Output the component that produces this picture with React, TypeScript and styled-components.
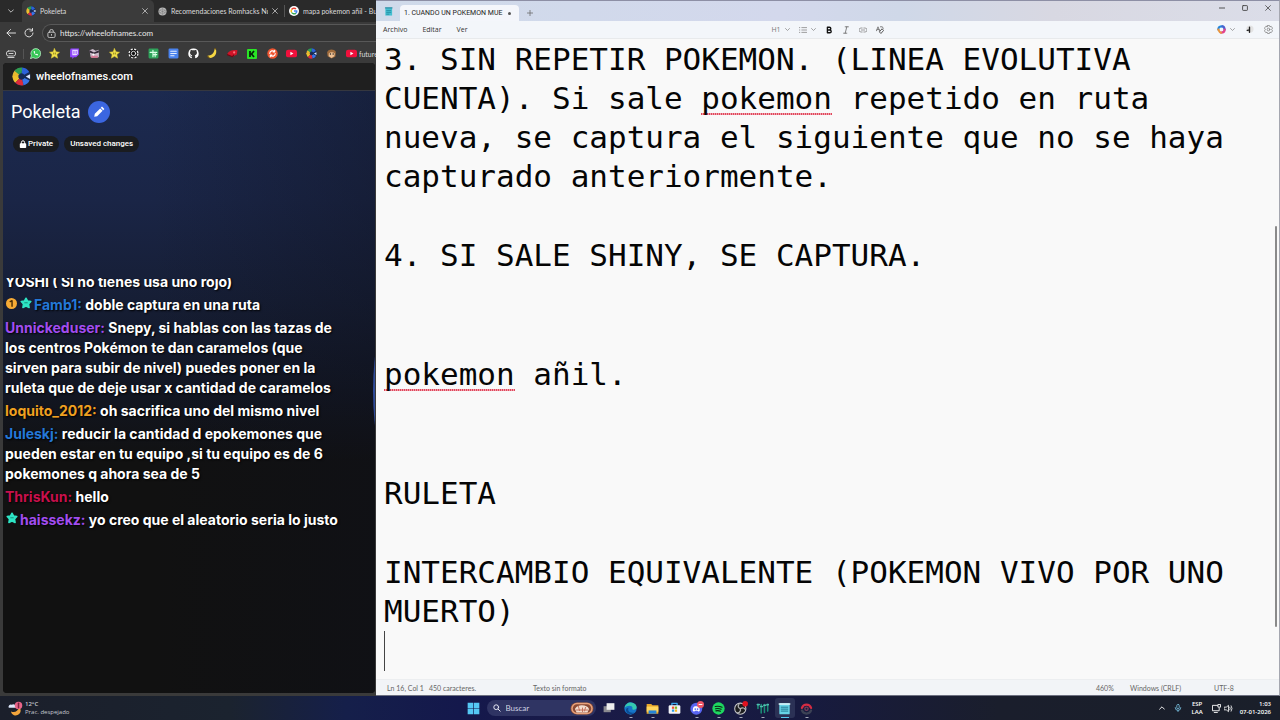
import React from "react";
import styled, { createGlobalStyle } from "styled-components";

const ui = `"Open Sans", "Noto Sans", sans-serif`;
const narrow = `Lato, "Open Sans", sans-serif`;

const Global = createGlobalStyle`
  *, *::before, *::after { box-sizing: border-box; }
  body { margin: 0; background: #3a3a3a; font-family: ${ui}; }
  button { margin: 0; padding: 0; border: 0; background: none; color: inherit; font: inherit; cursor: pointer; }
  svg { display: block; flex: none; }
  h1, p { margin: 0; font-weight: 400; }
`;

const Desktop = styled.div`
  min-height: 100vh;
  display: flex;
  flex-direction: column;
`;

const Windows = styled.main`
  flex: 1;
  display: grid;
  grid-template-columns: minmax(0, 376fr) minmax(0, 904fr);
`;

/* ---------- browser ---------- */

const Browser = styled.section`
  display: flex;
  flex-direction: column;
  background: #3a3a3a;
  color: #dcdcdc;
  overflow: hidden;
`;

const TabStrip = styled.div`
  display: flex;
  height: 22px;
  background: #2a2a2a;
`;

const TabMenu = styled.button`
  flex: none;
  width: 22px;
  display: grid;
  place-items: center;
`;

const Tab = styled.div<{ $active?: boolean; $width?: number }>`
  flex: ${(p) => (p.$width ? `none` : `1`)};
  width: ${(p) => (p.$width ? `${p.$width}px` : `auto`)};
  min-width: 0;
  display: flex;
  align-items: center;
  gap: 4px;
  padding: 0 ${(p) => (p.$width ? 6 : 0)}px 0 4px;
  border-radius: 5px 5px 0 0;
  background: ${(p) => (p.$active ? "#3b3b3b" : "transparent")};
`;

const TabTitle = styled.button`
  flex: 1;
  min-width: 0;
  overflow: hidden;
  white-space: nowrap;
  text-align: left;
  font: 7px/12px ${narrow};
`;

const TabDivider = styled.span`
  flex: none;
  width: 1px;
  height: 12px;
  margin: 5px 0;
  background: #555;
`;

const AddressRow = styled.div`
  display: flex;
  align-items: center;
  height: 22px;
  padding-left: 6px;
  gap: 8px;
`;

const Address = styled.label`
  flex: 1;
  display: flex;
  align-items: center;
  gap: 4px;
  height: 18px;
  padding-left: 4px;
  border: 1px solid #585858;
  border-right: 0;
  border-radius: 9px 0 0 9px;
  background: #343434;
`;

const AddressInput = styled.input`
  flex: 1;
  min-width: 0;
  padding: 0;
  border: 0;
  outline: 0;
  background: none;
  color: #e8e8e8;
  font: 8px/12px ${narrow};
`;

const Bookmarks = styled.nav`
  display: flex;
  align-items: center;
  height: 19px;
  padding-left: 6px;
  overflow: hidden;
`;

const BookmarkList = styled.div`
  flex: 1;
  display: flex;
  justify-content: space-between;
  margin-left: 5px;
`;

const BookmarkDivider = styled.span`
  width: 1px;
  height: 10px;
  margin-left: 7px;
  background: #555;
`;

const BookmarkLabel = styled.span`
  width: 17px;
  margin-left: 2px;
  overflow: hidden;
  white-space: nowrap;
  font: 7px/12px ${narrow};
`;

const Page = styled.div`
  position: relative;
  flex: 1;
  display: flex;
  flex-direction: column;
  margin: 0 1px 3px 3px;
  border-radius: 4px;
  overflow: hidden;
  background: #111;
`;

const SiteHeader = styled.header`
  display: flex;
  align-items: center;
  gap: 5px;
  height: 28px;
  padding-left: 9px;
  border-bottom: 1px solid #35373f;
  background: #1f1f1f;
  color: #fff;
  font: 500 11px/16px Roboto, sans-serif;
`;

const Wheel = styled.div`
  flex: 1;
  padding: 9px 0 0 2px;
  background: linear-gradient(90deg, transparent 40%, rgba(14, 16, 28, 0.35)),
    linear-gradient(180deg, #1c2a50 0, #1a2546 110px, #161e35 210px, #121622 300px, #111 370px);
`;

const WheelEdge = styled.div`
  position: absolute;
  top: 28px;
  left: calc(100% - 2px);
  width: 600px;
  height: 600px;
  border-radius: 50%;
  background: #2f4b9a;
`;

const TitleRow = styled.div`
  display: flex;
  align-items: center;
  gap: 7px;
  padding-left: 6px;
`;

const Title = styled.h1`
  color: #fff;
  font: 400 18px/24px Roboto, sans-serif;
`;

const EditButton = styled.button`
  width: 22px;
  height: 22px;
  display: grid;
  place-items: center;
  border-radius: 50%;
  background: #3b66e0;
`;

const Chips = styled.div`
  display: flex;
  gap: 5px;
  margin: 12px 0 0 8px;
`;

const Chip = styled.span`
  display: flex;
  align-items: center;
  gap: 1px;
  height: 16px;
  padding: 0 6px;
  border-radius: 8px;
  background: #1a1c20;
  color: #fff;
  font: 500 8px/16px Roboto, sans-serif;
`;

const Chat = styled.div`
  margin-top: 126px;
  padding-bottom: 16px;
  overflow: hidden;
  display: flex;
  flex-direction: column;
  gap: 3px;
`;

const Message = styled.p<{ $cut?: boolean }>`
  margin-top: ${(p) => (p.$cut ? "-6px" : "0")};
  color: #fff;
  font: 700 14px/20px Inter, "Open Sans", sans-serif;
  white-space: pre;
  text-shadow: 1px 1px 2px #000;
  svg { display: inline-block; margin: 0 2px 0 1px; vertical-align: 1px; }
`;

const Author = styled.span<{ $color: string }>`
  color: ${(p) => p.$color};
`;

/* ---------- notepad ---------- */

const Notepad = styled.section`
  display: flex;
  flex-direction: column;
  border-top: 1px solid #8d8fa5;
  border-right: 1px solid #a5a7b0;
  border-bottom: 1px solid #6d7080;
  background: #f9f9f9;
  color: #333;
`;

const NoteTitleBar = styled.div`
  display: flex;
  height: 20px;
  background: linear-gradient(90deg, #cfdaea, #d3d8ec 45%, #cfd8e8 58%, #d8d8e2 75%, #dbdde8);
`;

const AppIcon = styled.span`
  width: 24px;
  display: grid;
  place-items: center;
`;

const NoteTab = styled.button`
  width: 119px;
  height: 16px;
  margin-top: 4px;
  padding: 0 8px 0 4px;
  display: flex;
  align-items: center;
  justify-content: space-between;
  border-radius: 4px 4px 0 0;
  background: #f4f6fb;
  color: #222;
  font: 7px/12px Roboto, sans-serif;
  white-space: nowrap;
`;

const Dot = styled.i`
  width: 3px;
  height: 3px;
  border-radius: 50%;
  background: #555;
`;

const NewTab = styled.button`
  width: 22px;
  display: grid;
  place-items: center;
  padding-top: 4px;
`;

const WindowControls = styled.div`
  display: flex;
  margin-left: auto;
  height: 13px;
  button { width: 23px; display: grid; place-items: center; }
`;

const MenuBar = styled.div`
  display: grid;
  grid-template-columns: 1fr auto 1fr;
  align-items: center;
  height: 18px;
  border-bottom: 1px solid #e8eaec;
  background: #f3f6fa;
`;

const Menus = styled.div`
  display: flex;
  gap: 15px;
  padding-left: 7px;
  font-size: 7px;
  line-height: 12px;
`;

const Tools = styled.div<{ $end?: boolean }>`
  display: flex;
  align-items: center;
  gap: ${(p) => (p.$end ? "10px" : "9px")};
  justify-self: ${(p) => (p.$end ? "end" : "center")};
  padding-right: ${(p) => (p.$end ? "6px" : "0")};
  button { display: flex; align-items: center; gap: 4px; font-size: 7px; line-height: 10px; color: #777; }
`;

const EditorRow = styled.div`
  flex: 1;
  display: flex;
  justify-content: space-between;
`;

const Editor = styled.div`
  padding: 1px 0 0 8px;
  outline: 0;
  color: #050505;
  font: 31px/39px "DejaVu Sans Mono", monospace;
  white-space: pre;
`;

const Paragraph = styled.p<{ $blank?: number }>`
  margin-bottom: ${(p) => (p.$blank ?? 0) * 40}px;
`;

const Misspelled = styled.span`
  background: repeating-linear-gradient(90deg, #e0475c 0 1px, #f0a0ab 1px 2px) left calc(100% - 1px) / 100% 2px no-repeat;
`;

const Caret = styled.i`
  display: block;
  width: 1px;
  height: 40px;
  background: #444;
`;

const ScrollTrack = styled.div`
  display: flex;
  flex-direction: column;
  width: 4px;
  padding: 187px 0 52px;
`;

const ScrollThumb = styled.i`
  flex: 1;
  width: 2px;
  border-radius: 1px;
  background: #8a8a8a;
`;

const StatusBar = styled.footer`
  display: grid;
  grid-template-columns: 42px 104px 1fr 34px 84px 65px;
  align-items: center;
  height: 16px;
  padding-left: 11px;
  border-top: 1px solid #eceef0;
  background: #f2f4f7;
  color: #666;
  font: 7px/12px ${narrow};
  white-space: nowrap;
`;

/* ---------- taskbar ---------- */

const Taskbar = styled.footer`
  display: grid;
  grid-template-columns: 1fr auto 1fr;
  align-items: center;
  height: 24px;
  background: linear-gradient(90deg, #1b1f2b, #1b232f 18%, #151f4a 27%, #14184c 36%, #1a1b48 45%, #171a40 62%, #1a1e2c 78%, #1a1f2a);
  color: #fff;
  font-size: 7px;
  line-height: 8px;
`;

const Weather = styled.button`
  display: flex;
  align-items: center;
  gap: 2px;
  padding-left: 8px;
  text-align: left;
  white-space: nowrap;
  font-size: 6px;
  span { display: block; color: #c4c8d0; }
  b { display: block; font-weight: 600; }
`;

const Apps = styled.div`
  display: flex;
  gap: 2px;
`;

const AppButton = styled.button<{ $running?: boolean; $active?: boolean }>`
  position: relative;
  width: 20px;
  height: 20px;
  display: grid;
  place-items: center;
  border-radius: 3px;
  background: ${(p) => (p.$active ? "#2b3155" : "transparent")};
  &::after {
    content: "";
    display: ${(p) => (p.$running || p.$active ? "block" : "none")};
    position: absolute;
    bottom: 0;
    left: 50%;
    width: ${(p) => (p.$active ? 8 : 3)}px;
    height: 1px;
    transform: translateX(-50%);
    background: ${(p) => (p.$active ? "#58c8f0" : "#a5a8b8")};
  }
`;

const Search = styled.label`
  display: flex;
  align-items: center;
  gap: 5px;
  width: 109px;
  height: 16px;
  margin: 2px 1px;
  padding: 0 2px 0 6px;
  border-radius: 8px;
  background: #2f3463;
  input {
    flex: 1;
    min-width: 0;
    padding: 0;
    border: 0;
    outline: 0;
    background: none;
    font: 8px/12px ${narrow};
  }
  input::placeholder { color: #d0d3e4; opacity: 1; }
`;

const Tray = styled.div`
  justify-self: end;
  display: flex;
  align-items: center;
  gap: 9px;
  padding-right: 9px;
  font-size: 6px;
  font-weight: 600;
  text-align: center;
  white-space: nowrap;
`;

const TrayPair = styled.button`
  display: flex;
  gap: 3px;
`;

const Clock = styled.time`
  margin-left: -2px;
  text-align: right;
`;

/* ---------- icons ---------- */

type IconProps = { size?: number; h?: number; box?: string; children: React.ReactNode };
const Icon = ({ size = 10, h, box = "0 0 20 20", children }: IconProps) => (
  <svg width={size} height={h ?? size} viewBox={box} fill="none" strokeLinecap="round" strokeLinejoin="round" aria-hidden="true">
    {children}
  </svg>
);

const Close = ({ color = "#ccc", size = 6 }) => (
  <Icon size={size}><path d="M2 2 18 18M18 2 2 18" stroke={color} strokeWidth="2.6" /></Icon>
);
const Chevron = ({ color = "#888", size = 5, up = false }) => (
  <Icon size={size}><path d={up ? "M2 14 10 6l8 8" : "M2 6l8 8 8-8"} stroke={color} strokeWidth="3" /></Icon>
);
const WheelLogo = ({ size = 10 }) => (
  <Icon size={size}>
    <circle cx="10" cy="10" r="9.6" fill="#162a55" />
    <g strokeWidth="6" strokeLinecap="butt">
      <path d="M3.600 10.500A6.400 6.400 0 0 1 6 5" stroke="#e8b92e" />
      <path d="M3.600 9.500A6.400 6.400 0 0 0 5.500 14.500" stroke="#efc02c" />
      <path d="M5 6A6.400 6.400 0 0 1 10.500 3.600" stroke="#2f9d50" />
      <path d="M10.500 3.600A6.400 6.400 0 0 1 15.500 6.800" stroke="#2d62d8" />
      <path d="M5.500 14.500A6.400 6.400 0 0 0 11.500 16.200" stroke="#dc2b3a" />
      <path d="M11.500 16.200A6.400 6.400 0 0 0 15.800 12.800" stroke="#3975e8" />
    </g>
    <path d="M14.500 10l4.500-2.500v5z" fill="#dfe8ff" />
  </Icon>
);
const GoogleLogo = () => (
  <Icon size={10}>
    <circle cx="10" cy="10" r="10" fill="#fff" />
    <g strokeWidth="2.8" strokeLinecap="butt">
      <path d="M14 6A5.7 5.7 0 0 0 5.2 7" stroke="#ea4335" />
      <path d="M5.2 7a5.7 5.7 0 0 0 0 6" stroke="#fbbc05" />
      <path d="M5.2 13a5.7 5.7 0 0 0 8.5 1.3" stroke="#34a853" />
      <path d="M13.7 14.3A5.7 5.7 0 0 0 15.7 10H10" stroke="#4285f4" />
    </g>
  </Icon>
);
const Star = () => (
  <Icon size={11}><path d="M10 1l2.7 6 6.5.7-4.9 4.3 1.4 6.5L10 15.2l-5.700 3.300 1.400-6.500L.8 7.700l6.500-.7z" fill="#f2e34b" stroke="#d6c534" strokeWidth="1" /><path d="M8.500 9v2M11.500 9v2" stroke="#6a5c10" strokeWidth="1.300" /></Icon>
);
const YouTube = () => (
  <Icon size={11}><rect x="0" y="3" width="20" height="14" rx="4" fill="#f0103c" /><path d="M8 7l5.500 3L8 13z" fill="#fff" /></Icon>
);
const Bookmark = styled.button`
  width: 12px;
  height: 12px;
  display: grid;
  place-items: center;
`;

const bookmarks: [string, React.ReactNode][] = [
  ["WhatsApp", <Icon size={11}><path d="M1 19l1.500-5A9 9 0 1 1 6 17.800z" fill="#37c657" stroke="#d8ffe0" strokeWidth="1.200" /><path d="M6.500 6c0 4 3.500 7.500 7.500 7.500l.5-2-2.300-1-1.200 1c-1.200-.6-2-1.400-2.600-2.600l1-1.200-1-2.200z" fill="#fff" /></Icon>],
  ["Estrella", <Star />],
  ["Twitch", <Icon size={11}><path d="M3 1h15v11l-5 5H9l-3 3v-3H2V4z" fill="#9147ff" /><path d="M6 3h10v8l-3 2H6z" fill="#eadcff" /><path d="M9 6v4M13 6v4" stroke="#9147ff" strokeWidth="1.800" /></Icon>],
  ["Personaje", <Icon size={11}><path d="M1 4l6-2 5 3 6-2v14H3z" fill="#c9b9c9" /><path d="M1 4l8 4 9-4v4l-9 3-8-3z" fill="#332838" /><path d="M4 14h12v4H4z" fill="#d77b98" /><circle cx="8" cy="12" r="2" fill="#fff" /></Icon>],
  ["Favoritos", <Star />],
  ["Rueda", <Icon size={11}><circle cx="10" cy="10" r="9" fill="#111" /><circle cx="10" cy="10" r="8" stroke="#f2f2f2" strokeWidth="2.400" strokeDasharray="4 2.300" strokeLinecap="butt" /><circle cx="10" cy="10" r="4" stroke="#eee" strokeWidth="1.600" /></Icon>],
  ["Hojas", <Icon size={11}><rect x="1" y="1" width="18" height="18" rx="2" fill="#2fa35b" /><path d="M9 4v12M4 8h12M13 8v8M9 12h7" stroke="#d9ffe6" strokeWidth="2" /></Icon>],
  ["Documentos", <Icon size={11}><rect x="1" y="1" width="18" height="18" rx="2" fill="#4a83ee" /><path d="M5 6h10M5 10h10M5 14h6" stroke="#e5efff" strokeWidth="2" /></Icon>],
  ["GitHub", <Icon size={11}><path d="M10 1a9 9 0 0 0-3 17.600v-3c-2.500.5-3-1-3.500-2 2 .2 2 1.200 3.500 1 .1-.7.500-1.100.8-1.400-5-.8-4.700-6-3-7.600-.2-.8 0-1.800.2-2.400 1 .1 2 .7 2.700 1.100a9 9 0 0 1 4.600 0c.8-.5 1.700-1 2.700-1.100.3.800.4 1.600.2 2.400 1.800 2 1.700 6.800-3 7.600.6.5.8 1.200.8 2v3.400A9 9 0 0 0 10 1z" fill="#fff" /></Icon>],
  ["Plátano", <Icon size={11}><path d="M14 1l2 1c3 8-2 17-12 16l-3-4c7 0 12-4 13-13z" fill="#f6d743" /><path d="M1 15l3 3M14 1l2 1" stroke="#6b5117" strokeWidth="2" /></Icon>],
  ["Gorra", <Icon size={11}><path d="M0 12C3 5 9 3 19 4l-1 8-8 4z" fill="#d01528" /><path d="M0 12l10 4 2-3" stroke="#6f0a15" strokeWidth="2" /><circle cx="13" cy="8" r="2" fill="#ff707d" /></Icon>],
  ["Kick", <Icon size={10}><rect width="20" height="20" rx="2" fill="#29e625" /><path d="M6 4v12M14 4l-5 6 5 6" stroke="#05220a" strokeWidth="3.500" strokeLinecap="butt" /></Icon>],
  ["Sincronizar", <Icon size={11}><circle cx="10" cy="10" r="9.500" fill="#ee5430" /><path d="M5 10a5 5 0 0 1 9-3M15 10a5 5 0 0 1-9 3M14 4v3h-3M6 16v-3h3" stroke="#fff" strokeWidth="2" /></Icon>],
  ["YouTube", <YouTube />],
  ["Wheel of Names", <WheelLogo size={11} />],
  ["Mono", <Icon size={11}><path d="M2 8c1-6 12-8 16-1l-1 9-7 3-7-4z" fill="#9d6a3b" /><path d="M5 10c3-3 8-3 11 0l-1 5-5 3-5-3z" fill="#edc195" /><circle cx="8" cy="11" r="1.300" fill="#222" /><circle cx="13" cy="11" r="1.300" fill="#222" /></Icon>],
  ["YouTube futuro", <YouTube />],
];

const SubBadge = () => (
  <Icon size={12}>
    <path d="M10 2l2.500 4.500 5.500 1-3.800 4 1 6L10 15.200l-5.200 2.300 1-6L2 7.500l5.500-1z" fill="#2ee6c5" stroke="#2ee6c5" strokeWidth="2.500" />
    <path d="M8.500 9v1M11.500 9v1" stroke="#0b6a5c" strokeWidth="1.400" />
  </Icon>
);
const FirstBadge = () => (
  <Icon size={11}>
    <circle cx="10" cy="10" r="10" fill="#f6aa35" />
    <path d="M7.500 6.500L11 5v10" stroke="#4a2c05" strokeWidth="2.600" />
  </Icon>
);

const messages: { author?: string; color?: string; badges?: React.ReactNode; text: string }[] = [
  { text: "YOSHI ( SI no tienes usa uno rojo)" },
  { author: "Famb1", color: "#2478d8", badges: <><FirstBadge /><SubBadge /></>, text: "doble captura en una ruta" },
  {
    author: "Unnickeduser", color: "#a24df0",
    text: "Snepy, si hablas con las tazas de\nlos centros Pokémon te dan caramelos (que\nsirven para subir de nivel) puedes poner en la\nruleta que de deje usar x cantidad de caramelos",
  },
  { author: "loquito_2012", color: "#f0a020", text: "oh sacrifica uno del mismo nivel" },
  {
    author: "Juleskj", color: "#2478d8",
    text: "reducir la cantidad d epokemones que\npueden estar en tu equipo ,si tu equipo es de 6\npokemones q ahora sea de 5",
  },
  { author: "ThrisKun", color: "#c8104c", text: "hello" },
  { author: "haissekz", color: "#a24df0", badges: <SubBadge />, text: "yo creo que el aleatorio seria lo justo" },
];

type App = { name: string; running?: boolean; active?: boolean; icon: React.ReactNode };
const apps: App[] = [
  { name: "Vista de tareas", icon: <Icon size={12}><rect x="1" y="7" width="12" height="10" fill="#8a8a90" /><rect x="6" y="2" width="13" height="11" fill="#eee" /></Icon> },
  { name: "Edge", running: true, icon: <Icon size={13}><circle cx="10" cy="10" r="9.500" fill="#1675c8" /><path d="M1 9C2 2 9-1 15 2s6 10 0 10c-3 0-2-2-2-3 0-4-8-5-12 0z" fill="#35c9b0" /><path d="M7 9c-2 5 2 9 9 7-4 4-12 3-13-3 0-3 2-4 4-4z" fill="#0c4c94" /></Icon> },
  { name: "Explorador", running: true, icon: <Icon size={13}><path d="M1 3h7l2 2h9v13H1z" fill="#e9a92a" /><path d="M1 7h18v8H1z" fill="#ffd65c" /><path d="M4 13h12v5H4z" fill="#2685d8" /></Icon> },
  { name: "Store", icon: <Icon size={13}><path d="M6 5V2h8v3" stroke="#39a8ee" strokeWidth="2" /><rect x="1" y="5" width="18" height="13" rx="2" fill="#f3f5fa" /><path d="M6 7h3.500v3.500H6z" fill="#f05030" /><path d="M10.500 7H14v3.500h-3.500z" fill="#7ab821" /><path d="M6 11.500h3.500V15H6z" fill="#2a9fe8" /><path d="M10.500 11.500H14V15h-3.500z" fill="#f8b820" /></Icon> },
  { name: "Discord", running: true, icon: <Icon size={14}><circle cx="9" cy="11" r="8.500" fill="#5865f2" /><path d="M4 14c0-4 1-6 3-6.500h4c2 .5 3 2.500 3 6.500-2 2-3 1-3 0H7c0 1-1 2-3 0z" fill="#fff" /><circle cx="7.500" cy="11.500" r="1.200" fill="#5865f2" /><circle cx="10.800" cy="11.500" r="1.200" fill="#5865f2" /><circle cx="15" cy="5" r="5" fill="#ee5566" /><path d="M13 5h4" stroke="#fff" strokeWidth="1.600" /></Icon> },
  { name: "Spotify", running: true, icon: <Icon size={13}><circle cx="10" cy="10" r="9.500" fill="#1ed760" /><path d="M5 7c4-1 7-.6 10.500 1M5.500 10.500c3-.8 6-.5 8.500.8M6 13.600c2.500-.6 5-.4 7 .7" stroke="#0d2414" strokeWidth="1.700" /></Icon> },
  { name: "OBS", running: true, icon: <Icon size={14}><circle cx="9" cy="11" r="8" fill="#1d1d1f" stroke="#c9c9cc" strokeWidth="1.500" /><path d="M9 11c-3-1-4-4-2-6M9 11c3-2 6-1 7 1M9 11c1 3-1 6-4 6" stroke="#b5b5b8" strokeWidth="1.800" /><circle cx="16" cy="4" r="4" fill="#e0121f" /></Icon> },
  { name: "Mezclador", running: true, icon: <Icon size={13}><path d="M3 4v6M8 4v13M13 4v12M18 4v10" stroke="#1c8d77" strokeWidth="2.400" /><path d="M2 4h3M7 7h3M12 5h3M17 4h2" stroke="#4fc0b0" strokeWidth="2.400" /></Icon> },
  { name: "Bloc de notas", active: true, icon: <Icon size={13}><rect x="2" y="2" width="16" height="17" rx="1.500" fill="#67d3e6" /><path d="M2 3h16" stroke="#e4f8fc" strokeWidth="2.500" /><path d="M5 8h10M5 11h10M5 14h10" stroke="#176c86" strokeWidth="1.300" /></Icon> },
  { name: "Pokémon", running: true, icon: <Icon size={13}><path d="M3 9a7.500 7.500 0 0 1 14 0" stroke="#d52c43" strokeWidth="3.500" /><path d="M3 13a7.500 7.500 0 0 0 14 0" stroke="#3c4255" strokeWidth="3.500" /><circle cx="10" cy="10.500" r="2.500" stroke="#77405a" strokeWidth="2" /></Icon> },
];

export default function App() {
  return (
    <Desktop>
      <Global />
      <Windows>
        <Browser>
          <TabStrip>
            <TabMenu aria-label="Buscar pestañas"><Chevron color="#ccc" size={6} /></TabMenu>
            <Tab $active $width={132}>
              <WheelLogo />
              <TabTitle>Pokeleta</TabTitle>
              <button aria-label="Cerrar pestaña"><Close /></button>
            </Tab>
            <Tab $width={130}>
              <Icon size={9}><circle cx="10" cy="10" r="9" fill="#b9b9b9" /><path d="M4 7l6-3 6 3v6l-6 3-6-3zM4 7l12 6M16 7L4 13M10 4v12" stroke="#777" strokeWidth="1" /></Icon>
              <TabTitle>Recomendaciones Romhacks Nuzl</TabTitle>
              <button aria-label="Cerrar pestaña"><Close /></button>
            </Tab>
            <TabDivider />
            <Tab>
              <GoogleLogo />
              <TabTitle>mapa pokemon añil - Bus</TabTitle>
            </Tab>
          </TabStrip>
          <AddressRow>
            <button aria-label="Atrás"><Icon size={10}><path d="M19 10H2M9 3l-7 7 7 7" stroke="#ddd" strokeWidth="2" /></Icon></button>
            <button aria-label="Recargar"><Icon size={10}><path d="M18 10a8 8 0 1 1-2.500-6M17 1v5h-5" stroke="#ddd" strokeWidth="2" /></Icon></button>
            <Address>
              <Icon size={9}><rect x="2" y="7" width="16" height="12" rx="3" stroke="#ccc" strokeWidth="2" /><path d="M6 7V5a4 4 0 0 1 8 0v2M10 12v2" stroke="#ccc" strokeWidth="2" /></Icon>
              <AddressInput aria-label="Dirección" defaultValue="https://wheelofnames.com" />
            </Address>
          </AddressRow>
          <Bookmarks>
            <button aria-label="Grupos"><Icon size={10}><rect x="1" y="4" width="18" height="10" rx="4" stroke="#ccc" strokeWidth="2" /><path d="M6 9h8M4 17h12" stroke="#ccc" strokeWidth="2" /></Icon></button>
            <BookmarkDivider />
            <BookmarkList>
              {bookmarks.map(([name, icon]) => <Bookmark key={name} aria-label={name}>{icon}</Bookmark>)}
            </BookmarkList>
            <BookmarkLabel>future</BookmarkLabel>
          </Bookmarks>
          <Page>
            <SiteHeader><WheelLogo size={19} />wheelofnames.com</SiteHeader>
            <Wheel>
              <TitleRow>
                <Title>Pokeleta</Title>
                <EditButton aria-label="Editar título">
                  <Icon size={12}><path d="M2 18l1-5L12 4l4 4-9 9zM13 3l2-2 4 4-2 2z" fill="#fff" /></Icon>
                </EditButton>
              </TitleRow>
              <Chips>
                <Chip>
                  <Icon size={8}><rect x="2" y="8" width="16" height="12" rx="2" fill="#fff" /><path d="M6 9V6a4 4 0 0 1 8 0v3" stroke="#fff" strokeWidth="2.500" /></Icon>
                  Private
                </Chip>
                <Chip>Unsaved changes</Chip>
              </Chips>
              <Chat>
                {messages.map((m, i) => (
                  <Message key={i} $cut={i === 0}>
                    {m.badges}
                    {m.author && <Author $color={m.color!}>{m.author}: </Author>}
                    {m.text}
                  </Message>
                ))}
              </Chat>
            </Wheel>
            <WheelEdge />
          </Page>
        </Browser>

        <Notepad>
          <NoteTitleBar>
            <AppIcon><Icon size={9}><rect x="3" y="1" width="15" height="18" fill="#45bfd0" /><path d="M3 2h15" stroke="#267f96" strokeWidth="2" /><path d="M6 8h9M6 12h9M6 16h5" stroke="#1b8097" strokeWidth="1.500" /></Icon></AppIcon>
            <NoteTab>1. CUANDO UN POKEMON MUE<Dot /></NoteTab>
            <NewTab aria-label="Nueva pestaña"><Icon size={6}><path d="M10 1v18M1 10h18" stroke="#666" strokeWidth="2.500" /></Icon></NewTab>
            <WindowControls>
              <button aria-label="Minimizar"><Icon size={6}><path d="M1 10h18" stroke="#444" strokeWidth="3" /></Icon></button>
              <button aria-label="Maximizar"><Icon size={6}><rect x="2" y="2" width="16" height="16" rx="2" stroke="#444" strokeWidth="3" /></Icon></button>
              <button aria-label="Cerrar"><Close color="#444" /></button>
            </WindowControls>
          </NoteTitleBar>
          <MenuBar>
            <Menus><button>Archivo</button><button>Editar</button><button>Ver</button></Menus>
            <Tools>
              <button>H1 <Chevron /></button>
              <button aria-label="Lista"><Icon size={8}><path d="M7 4h12M7 10h12M7 16h12M1 4h1M1 10h1M1 16h1" stroke="#888" strokeWidth="2" /></Icon><Chevron /></button>
              <button aria-label="Negrita"><Icon size={8}><path d="M6 3h5a3.500 3.500 0 0 1 0 7H6zM6 10h6a3.500 3.500 0 0 1 0 7H6z" stroke="#111" strokeWidth="3.400" /></Icon></button>
              <button aria-label="Cursiva"><Icon size={8}><path d="M8 2h8M4 18h8M12 2L8 18" stroke="#666" strokeWidth="2" /></Icon></button>
              <button aria-label="Vínculo"><Icon size={8}><path d="M8 5H5a5 5 0 0 0 0 10h3M12 5h3a5 5 0 0 1 0 10h-3M6 10h8" stroke="#888" strokeWidth="2" /></Icon></button>
              <button aria-label="Borrar formato"><Icon size={8}><path d="M1 12L5 2l4 10M3 9h5M11 2h5l2 4" stroke="#666" strokeWidth="2" /><path d="M9 14l6-7 4 4-6 7z" stroke="#444" strokeWidth="2.200" /></Icon></button>
            </Tools>
            <Tools $end>
              <button aria-label="Copilot">
                <Icon size={9}><path d="M3 10C3 3 7 3 12 3" stroke="#2386dc" strokeWidth="5" /><path d="M12 3c4 0 4 3 5 7" stroke="#4962d0" strokeWidth="5" /><path d="M17 10c0 6-3 7-8 7" stroke="#e2448c" strokeWidth="5" /><path d="M9 17c-4 0-4-3-6-7" stroke="#e8953e" strokeWidth="4.500" /></Icon>
                <Chevron />
              </button>
              <button aria-label="Cuenta"><Icon size={9}><circle cx="11" cy="9" r="8" fill="#e3e3e3" /><path d="M10 5v11M5 12l5-1" stroke="#222" strokeWidth="3" /></Icon></button>
              <button aria-label="Configuración"><Icon size={9}><path d="M8 1h4l1 3 3-1 3 4-2 3 2 3-3 4-3-1-1 3H8l-1-3-3 1-3-4 2-3-2-3 3-4 3 1z" stroke="#777" strokeWidth="1.600" /><circle cx="10" cy="10" r="3" stroke="#777" strokeWidth="1.600" /></Icon></button>
            </Tools>
          </MenuBar>
          <EditorRow>
            <Editor role="textbox" aria-multiline="true" aria-label="Texto" tabIndex={0}>
              <Paragraph $blank={1}>
                {"3. SIN REPETIR POKEMON. (LINEA EVOLUTIVA\nCUENTA). Si sale "}
                <Misspelled>pokemon</Misspelled>
                {" repetido en ruta\nnueva, se captura el siguiente que no se haya\ncapturado anteriormente."}
              </Paragraph>
              <Paragraph $blank={2}>4. SI SALE SHINY, SE CAPTURA.</Paragraph>
              <Paragraph $blank={2}><Misspelled>pokemon</Misspelled> añil.</Paragraph>
              <Paragraph $blank={1}>RULETA</Paragraph>
              <Paragraph>{"INTERCAMBIO EQUIVALENTE (POKEMON VIVO POR UNO\nMUERTO)"}</Paragraph>
              <Caret />
            </Editor>
            <ScrollTrack><ScrollThumb /></ScrollTrack>
          </EditorRow>
          <StatusBar>
            <span>Ln 16, Col 1</span>
            <span>450 caracteres.</span>
            <span>Texto sin formato</span>
            <span>460%</span>
            <span>Windows (CRLF)</span>
            <span>UTF-8</span>
          </StatusBar>
        </Notepad>
      </Windows>

      <Taskbar>
        <Weather>
          <Icon size={15}>
            <path d="M4 14c5 2 9 0 11-6 5 6-1 13-7 11-2-1-4-3-4-5z" fill="#f3a53c" />
            <path d="M1 9a3 3 0 0 1 4-4 4 4 0 0 1 6 4z" fill="#dce6fa" />
            <circle cx="14" cy="6" r="5" fill="#e8658a" />
            <path d="M14 3v6" stroke="#7c2340" strokeWidth="2" />
          </Icon>
          <span><b>12°C</b>Prac. despejado</span>
        </Weather>
        <Apps>
          <AppButton aria-label="Inicio">
            <Icon size={13}><path d="M1 1h8.500v8.500H1zM10.500 1H19v8.500h-8.500zM1 10.500h8.500V19H1zM10.500 10.500H19V19h-8.500z" fill="#55c8f5" /></Icon>
          </AppButton>
          <Search>
            <Icon size={8}><circle cx="8" cy="8" r="6" stroke="#e4e6f2" strokeWidth="2.500" /><path d="M13 13l5 5" stroke="#e4e6f2" strokeWidth="2.500" /></Icon>
            <input aria-label="Buscar" placeholder="Buscar" />
            <Icon size={24} h={13} box="0 0 48 26">
              <rect x="1" y="1" width="46" height="24" rx="12" fill="#8b4a34" />
              <rect x="4" y="3" width="40" height="20" rx="10" stroke="#e8a27c" strokeWidth="3" />
              <path d="M10 14c3-9 24-11 28 0l-3 7H13z" fill="#f3ddcf" />
              <path d="M13 16h22M17 9l2 8M25 12v7M31 11l-2 7" stroke="#c4705a" strokeWidth="2" />
            </Icon>
          </Search>
          {apps.map((a) => (
            <AppButton key={a.name} aria-label={a.name} $running={a.running} $active={a.active}>{a.icon}</AppButton>
          ))}
        </Apps>
        <Tray>
          <button aria-label="Iconos ocultos"><Chevron color="#fff" size={6} up /></button>
          <button aria-label="Micrófono"><Icon size={8}><rect x="7" y="1" width="6" height="11" rx="3" stroke="#7cc8e8" strokeWidth="2" /><path d="M3 9a7 7 0 0 0 14 0M10 16v3" stroke="#7cc8e8" strokeWidth="2" /></Icon></button>
          <button>ESP<br />LAA</button>
          <TrayPair aria-label="Red y volumen">
            <Icon size={9}><path d="M12 3H1v12h15V9M5 19h7" stroke="#fff" strokeWidth="2" /><rect x="14" y="1" width="5" height="6" stroke="#fff" strokeWidth="2" /></Icon>
            <Icon size={9}><path d="M1 7h4l5-4v14l-5-4H1zM13 7q2 3 0 6M16 4q4 6 0 12" stroke="#fff" strokeWidth="1.800" /></Icon>
          </TrayPair>
          <Clock>1:03<br />07-01-2026</Clock>
        </Tray>
      </Taskbar>
    </Desktop>
  );
}
